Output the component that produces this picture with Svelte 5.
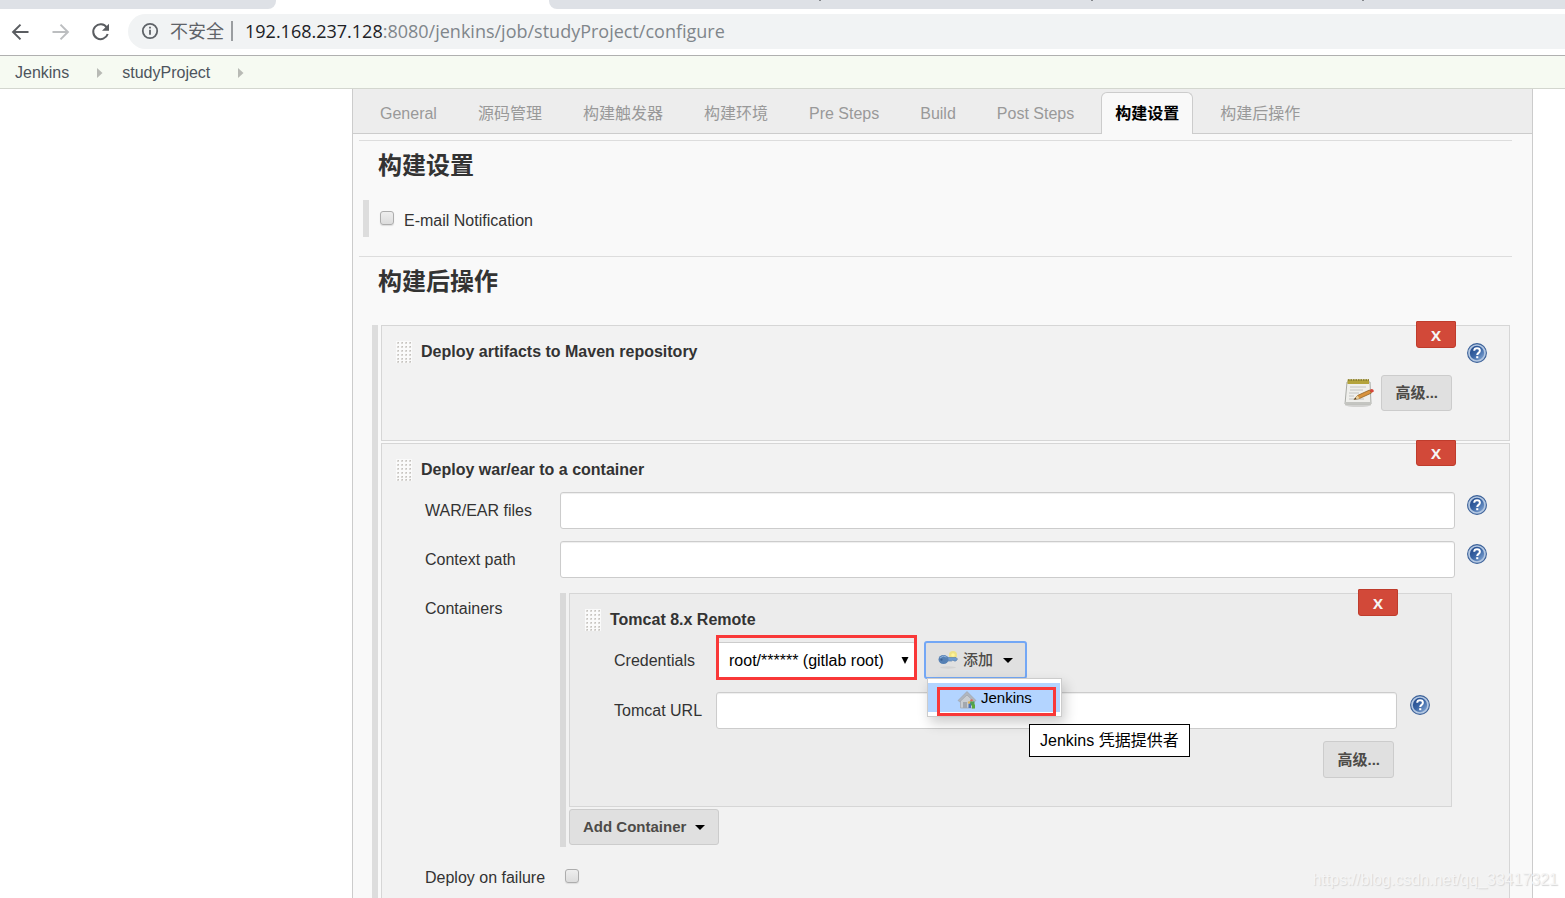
<script>
  const tabs = ['General', '源码管理', '构建触发器', '构建环境', 'Pre Steps', 'Build', 'Post Steps', '构建设置', '构建后操作'];
  let active = $state('构建设置');
  let menuOpen = $state(true);
</script>

{#snippet help(topic)}
  <button class="help" type="button" aria-label={`Help for ${topic}`}>
    <svg width="20" height="20" viewBox="0 0 20 20">
      <defs>
        <linearGradient id="helpFill" x1="0" y1="0" x2="1" y2="1">
          <stop offset="0" stop-color="#1f4587" />
          <stop offset="0.5" stop-color="#3a66a6" />
          <stop offset="1" stop-color="#8fb0da" />
        </linearGradient>
      </defs>
      <circle cx="10" cy="10" r="9.4" fill="#b4c8e2" stroke="#3d6299" stroke-width="1.1" />
      <circle cx="10" cy="10" r="7.2" fill="url(#helpFill)" />
      <path d="M7.200 7.700C7.300 6 8.500 5.300 10 5.300c1.700 0 2.900.9 2.900 2.400 0 2.100-2.700 2.200-2.700 4.300" fill="none" stroke="#fff" stroke-width="2" />
      <rect x="9.200" y="13.200" width="2.100" height="2" fill="#fff" />
    </svg>
  </button>
{/snippet}

{#snippet handle()}
  <svg class="handle" width="16" height="22" viewBox="0 0 16 22" aria-hidden="true">
    <rect width="16" height="22" fill="#fafafa" />
    {#each [1, 5, 9, 13] as x}
      {#each [1, 5, 9, 13, 17, 20] as y}
        <rect {x} {y} width="2" height="2" fill="#dad8d5" />
        <rect x={x + 1} {y} width="1" height="1" fill="#c4c1bd" />
      {/each}
    {/each}
  </svg>
{/snippet}

{#snippet caret()}
  <svg width="10" height="5" viewBox="0 0 10 5" aria-hidden="true"><path d="M0 0h10L5 5z" fill="#000" /></svg>
{/snippet}

<div class="page">
  <div class="browser">
    <div class="strip">
      <div class="strip-left"></div>
      <div class="strip-right"><i></i><i></i><i></i></div>
    </div>
    <div class="toolbar">
      <button class="nav" type="button" aria-label="Back">
        <svg width="20" height="20" viewBox="0 0 20 20"><path d="M18.500 10H3.500M10.500 2.600 3.100 10l7.400 7.400" fill="none" stroke="#5a5d61" stroke-width="2" /></svg>
      </button>
      <button class="nav" type="button" aria-label="Forward">
        <svg width="20" height="20" viewBox="0 0 20 20"><path d="M2.500 10h15M10.500 2.600l7.400 7.400-7.400 7.400" fill="none" stroke="#bcbec0" stroke-width="2" /></svg>
      </button>
      <button class="nav" type="button" aria-label="Reload">
        <svg width="20" height="20" viewBox="0 0 20 20"><path d="M16.800 5.600A7.400 7.400 0 1 0 17.700 12" fill="none" stroke="#5a5d61" stroke-width="2" /><path d="M19 1.800v7h-7z" fill="#5a5d61" /></svg>
      </button>
      <div class="omnibox">
        <svg width="18" height="18" viewBox="0 0 18 18" aria-hidden="true"><circle cx="9" cy="9" r="7.2" fill="none" stroke="#5f6368" stroke-width="1.8" /><path d="M9 7.800v5M9 4.800v1.800" stroke="#5f6368" stroke-width="1.8" /></svg>
        <span class="insecure">不安全</span>
        <span class="divider"></span>
        <span class="url"><b>192.168.237.128</b>:8080/jenkins/job/studyProject/configure</span>
      </div>
    </div>
  </div>

  <nav class="crumbs">
    <a href="#jenkins">Jenkins</a>
    <svg width="6" height="10" viewBox="0 0 6 10" aria-hidden="true"><path d="M0 0l5.500 5L0 10z" fill="#b8bab5" /></svg>
    <a href="#project">studyProject</a>
    <svg width="6" height="10" viewBox="0 0 6 10" aria-hidden="true"><path d="M0 0l5.500 5L0 10z" fill="#b8bab5" /></svg>
  </nav>

  <div class="body">
    <main>
      <div class="tabs">
        {#each tabs as tab}
          <button type="button" class="tab" class:active={tab === active} onclick={() => (active = tab)}>{tab}</button>
        {/each}
      </div>

      <section>
        <h2>构建设置</h2>
        <div class="optional">
          <input type="checkbox" id="email" />
          <label for="email">E-mail Notification</label>
        </div>
      </section>

      <section>
        <h2>构建后操作</h2>
        <div class="chunks">
          <article class="card">
            <button class="delete" type="button">X</button>
            <header>{@render handle()}<h3>Deploy artifacts to Maven repository</h3>{@render help('Maven repository')}</header>
            <div class="actions">
              <svg width="30" height="30" viewBox="0 0 30 30" aria-hidden="true">
                <ellipse cx="14" cy="27" rx="13" ry="2" fill="#d2d2d0" />
                <path d="M3 4h23l1 22H1z" fill="#efefec" stroke="#a9aba6" />
                <path d="M1 24h26v2.500H1z" fill="#c4c5c1" />
                <path d="M3.500 1.500h21.500v4.500h-21.500z" fill="#b4a43c" />
                <path d="M4 2h21" stroke="#837728" stroke-width="1.500" stroke-dasharray="1.500 1" />
                <path d="M6 9h16M6 12h13M5 15h10M5 18h5M5 21h15" stroke="#c2c4c2" />
                <path d="M10 21.500l3.500-4 12-5.500 2 3-12 5.500z" fill="#d9933d" stroke="#8f6224" stroke-width=".8" />
                <path d="M10 21.500l3.500-4 2 3z" fill="#e8cf9c" />
                <path d="M10 21.500l1.500-1.700 1 1.300z" fill="#333" />
                <path d="M25.500 12l2-.9q2.500 0 2.200 2.700l-2.200 1z" fill="#d6473b" />
              </svg>
              <button class="btn" type="button">高级...</button>
            </div>
          </article>

          <article class="card war">
            <button class="delete" type="button">X</button>
            <header>{@render handle()}<h3>Deploy war/ear to a container</h3></header>
            <div class="row">
              <label for="war">WAR/EAR files</label>
              <input type="text" id="war" />
              {@render help('WAR/EAR files')}
            </div>
            <div class="row">
              <label for="ctx">Context path</label>
              <input type="text" id="ctx" />
              {@render help('Context path')}
            </div>
            <div class="row containers">
              <span class="label">Containers</span>
              <div class="nested">
                <article class="card inner">
                  <button class="delete" type="button">X</button>
                  <header>{@render handle()}<h3>Tomcat 8.x Remote</h3></header>
                  <div class="row">
                    <label for="cred">Credentials</label>
                    <div class="cred">
                      <div class="select">
                        <select id="cred"><option>root/****** (gitlab root)</option></select>
                        <svg width="8" height="8" viewBox="0 0 8 8" aria-hidden="true"><path d="M0.500 0h7L4 7z" fill="#000" /></svg>
                        <div class="mark"></div>
                      </div>
                      <div class="add">
                        <button class="btn focus" type="button" aria-expanded={menuOpen} onclick={() => (menuOpen = !menuOpen)}>
                          <svg width="20" height="18" viewBox="0 0 20 18" aria-hidden="true">
                            <ellipse cx="10" cy="16.500" rx="8" ry="1.200" fill="#d3d3d3" />
                            <circle cx="15" cy="4" r="4" fill="#f4e36a" opacity=".75" />
                            <circle cx="15" cy="4" r="1.800" fill="#fff59a" />
                            <path d="M8 6.500h10l1.500 1.500-1.500 2h-2l-1-1-1.500 1H8z" fill="#6f9bd0" stroke="#5c82ad" stroke-width=".7" />
                            <ellipse cx="5.500" cy="8.500" rx="5" ry="4.500" fill="#5580b4" />
                            <path d="M2 7q3-3.500 6.500-1" stroke="#90b4de" fill="none" />
                            <circle cx="3.500" cy="8.700" r="1.100" fill="#3a5f92" />
                          </svg>
                          <span>添加</span>
                          {@render caret()}
                        </button>
                        {#if menuOpen}
                          <div class="menu">
                            <button type="button" class="item">
                              <svg width="20" height="20" viewBox="0 0 20 20" aria-hidden="true">
                                <path d="M3.500 10v8h13v-8L10 4z" fill="#c9cdd2" stroke="#a4a9b0" stroke-width=".8" />
                                <path d="M1 10.500 10 1.500l9 9-1.800 1.300L10 5l-7.200 6.800z" fill="#b0b6be" stroke="#9aa0a8" stroke-width=".6" />
                                <path d="M6 12h4v6H6z" fill="#a3a8ae" />
                                <circle cx="14.500" cy="10.500" r="1.300" fill="#d9695c" />
                                <path d="M12.500 11.500h5v4h-5z" fill="#4fa055" />
                                <path d="M11.500 13.500h2.500v4.500h-2.500z" fill="#4e74b5" />
                                <path d="M15 14.500h3v4h-3z" fill="#58a93e" />
                                <circle cx="12" cy="12.500" r="1.200" fill="#e0b860" />
                              </svg>
                              <span>Jenkins</span>
                            </button>
                            <div class="mark"></div>
                          </div>
                          <div class="tooltip" role="tooltip">Jenkins 凭据提供者</div>
                        {/if}
                      </div>
                    </div>
                  </div>
                  <div class="row">
                    <label for="tomcat">Tomcat URL</label>
                    <input type="text" id="tomcat" />
                    {@render help('Tomcat URL')}
                  </div>
                  <div class="actions"><button class="btn" type="button">高级...</button></div>
                </article>
                <button class="btn container-btn" type="button"><span>Add Container</span>{@render caret()}</button>
              </div>
            </div>
            <div class="row">
              <label for="fail">Deploy on failure</label>
              <div class="check"><input type="checkbox" id="fail" /></div>
            </div>
          </article>
        </div>
      </section>
    </main>
  </div>
  <div class="watermark">https://blog.csdn.net/qq_33417321</div>
</div>

<style>
  :global(body) { margin: 0; background: #fff; }
  * { box-sizing: border-box; }
  .page {
    position: relative;
    display: flex;
    flex-direction: column;
    height: 100vh;
    overflow: hidden;
    color: #333;
    font: 16px/24px "Liberation Sans", "Noto Sans CJK SC", sans-serif;
  }
  button, input, select { font: inherit; margin: 0; }
  button { padding: 0; border: 0; background: none; cursor: pointer; }
  svg { display: block; flex: none; }

  .browser { flex: none; border-bottom: 1px solid #b0b0b0; }
  .strip { display: flex; justify-content: space-between; height: 9px; }
  .strip-left { width: 276px; background: #dee1e6; border-bottom-right-radius: 8px; }
  .strip-right {
    display: flex;
    justify-content: space-between;
    width: calc(100% - 549px);
    padding: 0 201px 0 270px;
    background: #dee1e6;
    border-bottom-left-radius: 8px;
  }
  .strip-right i { width: 2px; height: 1px; background: #85888c; }
  .toolbar { display: flex; align-items: center; gap: 20px; height: 46px; padding: 0 0 1px 10px; }
  .nav { width: 20px; height: 20px; }
  .omnibox {
    flex: 1;
    display: flex;
    align-items: center;
    height: 35px;
    margin-left: -2px;
    padding: 0 0 1px 13px;
    border-radius: 18px 0 0 18px;
    background: #f1f3f4;
    color: #80868b;
    font: 18px/24px "Open Sans", "Noto Sans CJK SC", sans-serif;
    white-space: nowrap;
  }
  .insecure { margin-left: 11px; color: #5f6368; }
  .divider { width: 2px; height: 20px; margin: 0 12px 0 7px; background: #9a9da0; }
  .url b { font-weight: 400; color: #202124; }

  .crumbs {
    flex: none;
    display: flex;
    align-items: center;
    height: 33px;
    padding: 1px 0 0 15px;
    background: #f6faf2;
    border-bottom: 1px solid #d3d6cf;
  }
  .crumbs a { color: #4d545d; text-decoration: none; }
  .crumbs svg { margin: 0 19px 0 28px; }

  .body { flex: 1; min-height: 0; padding: 0 32px 0 352px; }
  main { height: 100%; overflow: hidden; border: solid #ccc; border-width: 0 1px; background: #f9f9f9; }
  .tabs {
    display: flex;
    gap: 13px;
    height: 45px;
    padding: 3px 0 0 13px;
    margin-bottom: 6px;
    background: #ededed;
    border-bottom: 1px solid #ccc;
  }
  .tab {
    height: 42px;
    padding: 0 13px;
    border: 1px solid transparent;
    border-bottom: 0;
    border-radius: 6px 6px 0 0;
    color: #999;
    white-space: nowrap;
  }
  .tab.active { background: #f9f9f9; border-color: #ccc; color: #000; font-weight: 700; }

  section { margin: 0 20px 0 6px; border-top: 1px solid #ddd; }
  h2 { margin: 0; padding: 7px 0 0 19px; font-size: 24px; line-height: 36px; }
  h3 { margin: 0; font-size: 16px; line-height: 24px; }
  .optional {
    display: flex;
    align-items: center;
    gap: 10px;
    height: 37px;
    margin: 16px 0 19px 4px;
    padding: 4px 0 0 11px;
    border-left: 6px solid #ddd;
  }
  .optional input { margin-bottom: 6px; }
  input[type="checkbox"] {
    appearance: none;
    display: block;
    width: 14px;
    height: 14px;
    border: 1px solid #adadad;
    border-radius: 3px;
    background: linear-gradient(#eee, #dcdcdc);
    box-shadow: 0 1px 1px #ddd;
  }
  input[type="checkbox"]:checked { background: #4d7fc4; }

  .chunks {
    display: flex;
    flex-direction: column;
    gap: 2px;
    margin: 25px 2px 0 13px;
    padding-left: 3px;
    border-left: 6px solid #ddd;
  }
  .card { position: relative; border: 1px solid #d6d6d6; background: #f2f2f2; }
  .card > header { display: flex; align-items: center; gap: 9px; height: 49px; padding: 2px 22px 0 14px; }
  .card.war > header, .card.inner > header { height: 48px; padding-top: 4px; }
  .card.inner > header { padding-left: 15px; }
  header :global(.help) { margin-left: auto; margin-top: 2px; }
  .help { display: block; width: 20px; height: 20px; }
  .delete {
    position: absolute;
    top: -5px;
    right: 53px;
    width: 40px;
    height: 27px;
    border: 1px solid #bf3c2c;
    border-radius: 1px 1px 3px 3px;
    background: #d24939;
    color: #f5f5f5;
    font: 700 15px/24px "Open Sans", sans-serif;
  }
  .war > .delete { top: -4px; height: 26px; }
  .inner > .delete { top: -5px; height: 27px; }
  .actions { display: flex; justify-content: flex-end; align-items: center; gap: 7px; padding: 0 57px 29px 0; }
  .btn {
    display: flex;
    align-items: center;
    height: 36px;
    padding: 0 13px;
    border: 1px solid #ccc;
    border-radius: 3px;
    background: #e0e0e0;
    color: #4d4b48;
    font-weight: 700;
    font-size: 15px;
    white-space: nowrap;
  }
  .row { display: grid; grid-template-columns: 135px 1fr 20px; padding: 0 22px 0 43px; margin-bottom: 12px; }
  .row > label, .row > .label { line-height: 37px; }
  .row > :global(.help) { margin-top: 3px; }
  input[type="text"] {
    width: calc(100% - 12px);
    height: 37px;
    padding: 0 12px;
    border: 1px solid #ccc;
    border-radius: 3px;
    background: #fff;
    box-shadow: inset 0 1px 1px #eee;
  }
  .nested { margin: 3px 15px 0 0; padding: 0 0 2px 3px; border-left: 6px solid #d9d9d9; }
  .inner { margin-bottom: 2px; background: #ececec; }
  .inner .row { grid-template-columns: 102px 1fr 20px; padding: 0 21px 0 44px; margin-bottom: 13px; }
  .inner input[type="text"] { width: calc(100% - 13px); }
  .inner .actions { padding-bottom: 28px; margin-top: -1px; }
  .inner .actions .btn { height: 37px; }
  .cred { display: flex; align-items: flex-end; gap: 8px; height: 37px; }
  .select { position: relative; width: 200px; }
  select {
    appearance: none;
    display: block;
    width: 100%;
    height: 37px;
    padding: 1px 24px 0 12px;
    border: 1px solid #ccc;
    border-radius: 3px;
    background: #fff;
    color: #000;
  }
  .select svg { position: absolute; top: 15px; right: 7px; pointer-events: none; }
  .mark { position: absolute; border: 3px solid #f93838; pointer-events: none; }
  .select .mark { inset: -7px -1px -1px 0; }
  .add { position: relative; }
  .focus { height: 38px; padding: 0 12px; border: 2px solid #73a7f5; font-weight: 500; }
  .focus span { margin: 0 10px 0 5px; }
  .menu {
    position: absolute;
    z-index: 2;
    top: 37px;
    left: 3px;
    width: 135px;
    padding: 4px 1px 4px 0;
    border: 1px solid #ccc;
    background: #fff;
    box-shadow: 3px 6px 12px rgba(0, 0, 0, 0.2);
  }
  .menu .mark { inset: 8px 5px 0 9px; }
  .item {
    display: flex;
    align-items: center;
    gap: 4px;
    width: 100%;
    height: 29px;
    padding-left: 29px;
    background: #b3d4ff;
    color: #000;
    font-size: 15px;
  }
  .item svg { margin-top: 4px; }
  .tooltip {
    position: absolute;
    z-index: 3;
    top: 83px;
    left: 105px;
    padding: 4px 10px 3px;
    border: 1px solid #000;
    background: #fff;
    color: #000;
    white-space: nowrap;
  }
  .container-btn span { margin-right: 9px; }
  .check { padding: 10px 0 0 5px; }
  .watermark {
    position: absolute;
    right: 7px;
    bottom: 6px;
    color: #f5f5f5;
    text-shadow: 1px 1px 1px #d6d6d6;
    white-space: nowrap;
  }
</style>
